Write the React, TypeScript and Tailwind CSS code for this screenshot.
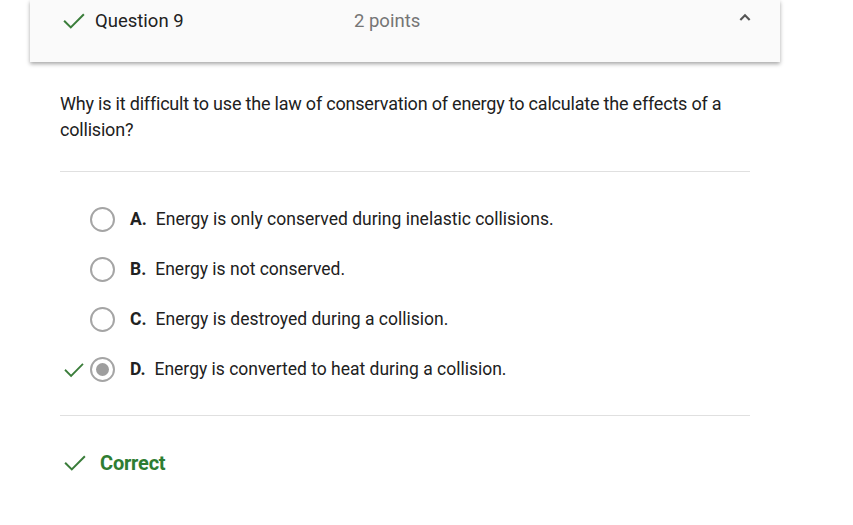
import React from "react";

const Check = ({ className = "" }: { className?: string }) => (
  <svg viewBox="0 0 24 24" className={className} fill="none" stroke="currentColor" strokeWidth={2.2} strokeLinecap="square" strokeLinejoin="miter">
    <path d="M2 12.5 L8.5 19 L22 5.5" />
  </svg>
);

const options = [
  { l: "A.", t: "Energy is only conserved during inelastic collisions." },
  { l: "B.", t: "Energy is not conserved." },
  { l: "C.", t: "Energy is destroyed during a collision." },
  { l: "D.", t: "Energy is converted to heat during a collision.", sel: true },
];

export default function App() {
  return (
    <div className="w-[853px] h-[525px] bg-white overflow-hidden" style={{ fontFamily: "Roboto, 'Liberation Sans', sans-serif" }}>
      <div className="ml-[30px] w-[750px] h-[62px] bg-[#fafafa] shadow-[0_2px_4px_rgba(0,0,0,0.35)] relative flex items-start pt-[10px]">
        <Check className="w-[22px] h-[22px] text-[#3a7d3a] ml-[33px] mt-[0px]" />
        <span className="ml-[10px] text-[18.5px] text-[#212121] leading-[22px]">Question 9</span>
        <span className="absolute left-[324px] top-[10px] text-[18.5px] text-[#757575] leading-[22px]">2 points</span>
        <svg viewBox="0 0 24 24" className="absolute left-[707px] top-[10px] w-[16px] h-[16px] text-[#555]" fill="none" stroke="currentColor" strokeWidth={3.2}>
          <path d="M5 15 L12 8 L19 15" />
        </svg>
      </div>
      <div className="ml-[60px] w-[690px]">
        <p className="mt-[29px] text-[18px] leading-[26px] text-[#212121] tracking-[-0.2px]">
          Why is it difficult to use the law of conservation of energy to calculate the effects of a collision?
        </p>
        <div className="mt-[28px] border-t border-[#e0e0e0]" />
        <div className="pt-[35px] flex flex-col gap-[26px]">
          {options.map((o) => (
            <div key={o.l} className="flex items-center h-[24px] relative">
              {o.sel && <Check className="absolute left-[3px] top-[3px] w-[22px] h-[20px] text-[#3a7d3a]" />}
              <div className="ml-[30px] w-[25px] h-[25px] rounded-full border-2 border-[#a5a5a5] flex items-center justify-center">
                {o.sel && <div className="w-[13px] h-[13px] rounded-full bg-[#9e9e9e]" />}
              </div>
              <span className="ml-[15px] text-[17.5px] font-bold text-[#212121]">{o.l}</span>
              <span className="ml-[9px] text-[17.5px] text-[#212121]">{o.t}</span>
            </div>
          ))}
        </div>
        <div className="mt-[34px] border-t border-[#e0e0e0]" />
        <div className="mt-[32px] flex items-center">
          <Check className="ml-[3px] w-[24px] h-[22px] text-[#3a7d3a]" />
          <span className="ml-[13px] text-[20px] font-bold text-[#2e7d32] tracking-[-0.2px]">Correct</span>
        </div>
      </div>
    </div>
  );
}
